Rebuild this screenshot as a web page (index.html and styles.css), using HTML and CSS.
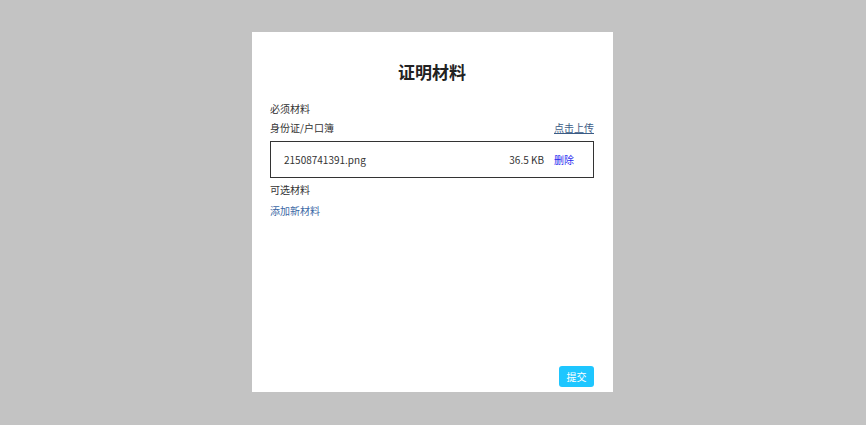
FILE: index.html
```html
<!DOCTYPE html>
<html lang="zh-CN">
<head>
  <meta charset="UTF-8" />
  <meta name="viewport" content="width=device-width, initial-scale=1.0" />
  <title>证明材料</title>
  <link rel="stylesheet" href="styles.css">
</head>
<body>
  <div class="dialog">
    <h2>证明材料</h2>
    <div class="section-label">必须材料</div>
    <div class="row">
      <span>身份证/户口簿</span>
      <a class="upload" href="#">点击上传</a>
    </div>
    <div class="file-box">
      <span class="file-name">21508741391.png</span>
      <span class="file-size">36.5 KB</span>
      <a class="remove" href="#">删除</a>
    </div>
    <div class="section-label optional">可选材料</div>
    <a class="add-link" href="#">添加新材料</a>
    <div class="actions">
      <button>提交</button>
    </div>
  </div>
</body>
</html>
```

FILE: styles.css
```css
* {
  box-sizing: border-box;
  margin: 0;
  padding: 0;
  font-family: 'Noto Sans CJK SC', 'Noto Sans', sans-serif;
}

body {
  background-color: #c3c3c3;
  display: flex;
  justify-content: center;
  align-items: center;
  height: 100vh;
  padding: 0 1px 1px 0;
}

.dialog {
  background-color: white;
  width: 361px;
  height: 360px;
  padding: 28px 19px 5px 18px;
  display: flex;
  flex-direction: column;
  color: #333;
  font-size: 10px;
}

h2 {
  text-align: center;
  font-size: 17px;
  font-weight: 700;
  line-height: 24px;
  color: #222;
  margin-bottom: 18px;
}

.section-label {
  line-height: 14px;
  margin-bottom: 5px;
}

.row {
  display: flex;
  justify-content: space-between;
  line-height: 14px;
}

.upload {
  color: #3b5b85;
  text-decoration: underline;
}

.file-box {
  display: flex;
  align-items: center;
  height: 37px;
  margin-top: 6px;
  border: 1px solid #333;
  padding: 0 19px 0 13px;
  font-size: 10px;
}

.file-name {
  flex: 1;
}

.file-size {
  margin-right: 10px;
}

.remove {
  color: #2b2bf0;
  text-decoration: none;
}

.optional {
  margin-top: 5px;
  margin-bottom: 7px;
}

.add-link {
  color: #3b68a5;
  text-decoration: none;
  line-height: 14px;
}

.actions {
  margin-top: auto;
  display: flex;
  justify-content: flex-end;
}

button {
  background-color: #1ec6ff;
  color: white;
  border: none;
  border-radius: 3px;
  width: 35px;
  height: 21px;
  font-size: 10px;
}
```
